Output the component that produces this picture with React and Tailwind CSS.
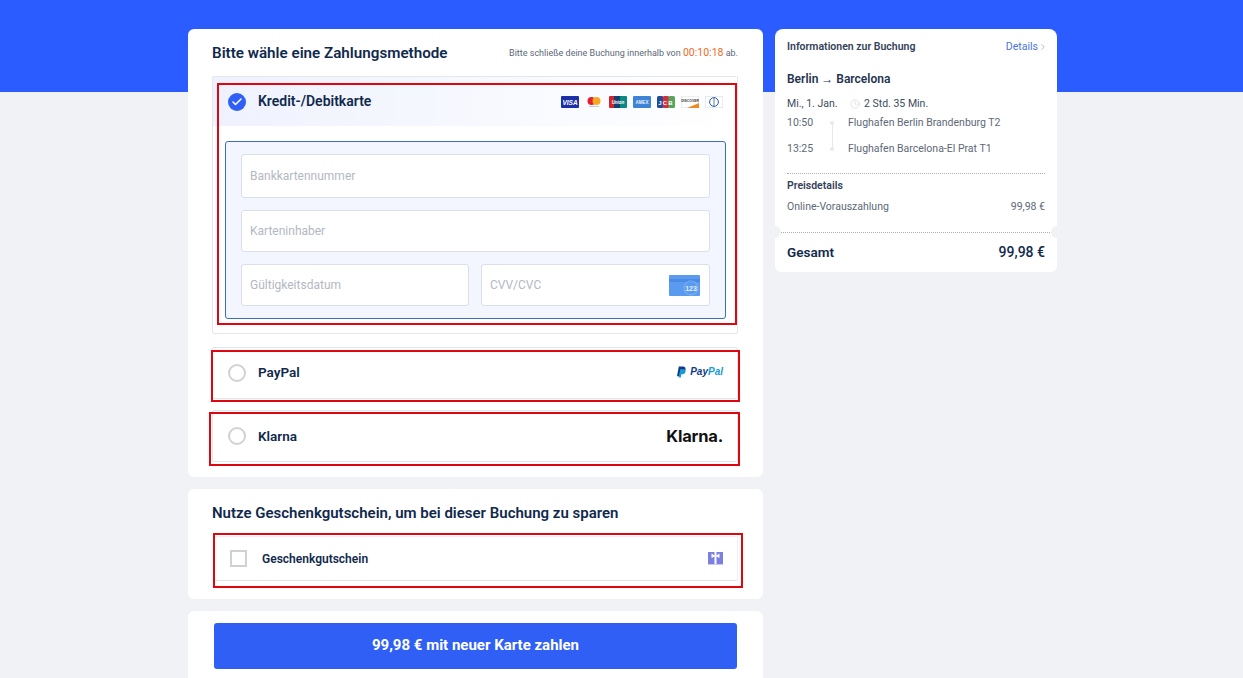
import { Check, ChevronRight, Clock } from "lucide-react";

const navy = "text-[#0f294d]";

function RedFrame({ className }) {
  return <div className={`pointer-events-none absolute border-2 border-[#e0060f] ${className}`} />;
}

function CardLogos() {
  return (
    <div className="flex items-center gap-[6px]">
      <svg width="18" height="12" viewBox="0 0 18 12">
        <rect width="18" height="12" rx="1" fill="#1c2fa8" />
        <text x="9" y="8.5" textAnchor="middle" fontSize="6.5" fontWeight="700" fontStyle="italic" fill="#fff" fontFamily="Liberation Sans, sans-serif">VISA</text>
      </svg>
      <svg width="18" height="12" viewBox="0 0 18 12">
        <circle cx="6.5" cy="5" r="4" fill="#e5202e" />
        <circle cx="11.5" cy="5" r="4" fill="#f7a823" />
        <rect x="4" y="10" width="10" height="1" fill="#c9c9d2" />
      </svg>
      <svg width="18" height="12" viewBox="0 0 18 12">
        <rect width="7" height="12" rx="1" fill="#d2232f" />
        <rect x="5" width="7" height="12" fill="#12406f" />
        <rect x="11" width="7" height="12" rx="1" fill="#0a8a83" />
        <text x="9" y="8" textAnchor="middle" fontSize="4.5" fontWeight="700" fontStyle="italic" fill="#fff" fontFamily="Liberation Sans, sans-serif">Union</text>
      </svg>
      <svg width="18" height="12" viewBox="0 0 18 12">
        <rect width="18" height="12" rx="1" fill="#3d84d6" />
        <text x="9" y="8" textAnchor="middle" fontSize="4.5" fontWeight="700" fill="#e6f0fb" fontFamily="Liberation Sans, sans-serif">AMEX</text>
      </svg>
      <svg width="18" height="12" viewBox="0 0 18 12">
        <rect width="6.5" height="12" rx="1.5" fill="#1f4c9c" />
        <rect x="5.75" width="6.5" height="12" rx="1.5" fill="#d3303f" />
        <rect x="11.5" width="6.5" height="12" rx="1.5" fill="#55a65a" />
        <text x="9" y="8.5" textAnchor="middle" fontSize="6" fontWeight="700" fill="#fff" letterSpacing="1.2" fontFamily="Liberation Sans, sans-serif">JCB</text>
      </svg>
      <svg width="18" height="12" viewBox="0 0 18 12">
        <rect x="0.25" y="0.25" width="17.5" height="11.5" fill="#fff" stroke="#dcdfe6" strokeWidth="0.5" />
        <path d="M6 12 L18 7 V12 Z" fill="#ee8a22" />
        <text x="9" y="6" textAnchor="middle" fontSize="3.4" fontWeight="700" fill="#333" fontFamily="Liberation Sans, sans-serif">DISCOVER</text>
      </svg>
      <svg width="18" height="12" viewBox="0 0 18 12">
        <rect x="0.25" y="0.25" width="17.5" height="11.5" fill="#fff" stroke="#cfdcef" strokeWidth="0.5" />
        <circle cx="9" cy="6" r="4.4" fill="none" stroke="#2a5aa8" strokeWidth="1" />
        <rect x="8.6" y="2" width="0.8" height="8" fill="#2a5aa8" />
      </svg>
    </div>
  );
}

function PayPalLogo() {
  return (
    <div className="-mt-[3px] flex items-center gap-[4px]">
      <svg width="9" height="12" viewBox="0 0 10 12">
        <path d="M2 0 H6.5 C9 0 10 1.6 9.4 3.6 C8.9 5.6 7.2 6.8 5 6.8 H3.6 L3 10.6 H0 Z" fill="#123a86" />
        <path d="M3.6 3 H8 C9.6 3.4 9.9 4.8 9.4 6 C8.9 7.8 7.4 8.6 5.6 8.6 H4.8 L4.3 12 H1.8 Z" fill="#179bd7" />
      </svg>
      <span className="font-['Liberation_Sans',sans-serif] text-[10px] leading-none font-bold italic">
        <span className="text-[#123a86]">Pay</span>
        <span className="text-[#179bd7]">Pal</span>
      </span>
    </div>
  );
}

function Field({ label, className, children }) {
  return (
    <div className={`flex items-center justify-between rounded-[3px] border border-[#d9e0ec] bg-white pr-[9px] pl-[8px] text-[12px] text-[#b3b8c2] ${className}`}>
      <span>{label}</span>
      {children}
    </div>
  );
}

function Radio() {
  return <span className="h-[18px] w-[18px] shrink-0 rounded-full border-2 border-[#ced1d6] bg-white" />;
}

export default function App() {
  return (
    <div className={`relative h-[678px] overflow-hidden bg-[#f0f2f6] font-['Roboto',sans-serif] ${navy}`}>
      <div className="h-[92px] bg-[#2b5cff]" />
      <div className="-mt-[63px] flex items-start gap-[12px] pl-[188px]">
        <div className="flex w-[575px] flex-col gap-[12px]">
          <section className="h-[448px] rounded-[6px] bg-white pt-[13px] pr-[25px] pl-[24px]">
            <div className="flex h-[22px] items-center justify-between">
              <h1 className="text-[15.2px] font-semibold">Bitte wähle eine Zahlungsmethode</h1>
              <p className="text-[9px] text-[#5a6779]">
                Bitte schließe deine Buchung innerhalb von{" "}
                <span className="text-[10.5px] text-[#ee6a1f]">00:10:18</span> ab.
              </p>
            </div>
            <div className="relative mt-[12px] h-[258px] rounded-[2px] border border-[#e3e6eb]">
              <div className="flex h-[49px] items-center bg-[linear-gradient(90deg,#eff2fe,#ffffff)] pr-[14px] pl-[15px]">
                <span className="flex h-[18px] w-[18px] items-center justify-center rounded-full bg-[#2f5ff5]">
                  <Check size={12} strokeWidth={3} color="#fff" />
                </span>
                <span className="ml-[12px] flex-1 text-[14px] font-semibold">Kredit-/Debitkarte</span>
                <CardLogos />
              </div>
              <div className="mt-[15px] mr-[11px] ml-[12px] flex h-[178px] flex-col rounded-[3px] border border-[#3a6fc0] bg-[#f3f6fe] px-[15px] pt-[12px]">
                <Field label="Bankkartennummer" className="h-[44px]" />
                <Field label="Karteninhaber" className="mt-[12px] h-[42px]" />
                <div className="mt-[12px] flex gap-[12px]">
                  <Field label="Gültigkeitsdatum" className="h-[42px] w-[228px]" />
                  <Field label="CVV/CVC" className="h-[42px] flex-1">
                    <svg width="31" height="21" viewBox="0 0 31 21">
                      <rect width="31" height="21" rx="1" fill="#5b9bef" />
                      <rect y="4" width="31" height="3" fill="#4a8be6" />
                      <circle cx="22" cy="13" r="7" fill="none" stroke="#9cc4f7" strokeWidth="0.6" />
                      <text x="22" y="15.5" textAnchor="middle" fontSize="7" fontWeight="700" fill="#e4effd" fontFamily="Liberation Sans, sans-serif">123</text>
                    </svg>
                  </Field>
                </div>
              </div>
              <RedFrame className="top-[6px] left-[4px] h-[242px] w-[520px]" />
            </div>
            <div className="relative mt-[13px] flex h-[52px] items-center justify-between rounded-[2px] border border-[#e3e6eb] pr-[14px] pl-[15px]">
              <div className="flex items-center">
                <Radio />
                <span className="-mt-[2px] ml-[12px] text-[13.5px] font-semibold">PayPal</span>
              </div>
              <PayPalLogo />
              <RedFrame className="top-[2px] -right-[3px] -left-[2px] h-[52px]" />
            </div>
            <div className="relative mt-[11px] flex h-[52px] items-center justify-between rounded-[2px] border border-[#e3e6eb] pr-[14px] pl-[15px]">
              <div className="flex items-center">
                <Radio />
                <span className="ml-[12px] text-[13.5px] font-semibold">Klarna</span>
              </div>
              <span className="font-['Inter',sans-serif] text-[16.5px] leading-none font-bold tracking-[-0.2px] text-[#111]">Klarna.</span>
              <RedFrame className="top-[1px] -right-[3px] -left-[4px] h-[54px]" />
            </div>
          </section>

          <section className="h-[110px] rounded-[6px] bg-white pt-[13px] pr-[25px] pl-[24px]">
            <h2 className="flex h-[22px] items-center text-[15px] font-semibold">Nutze Geschenkgutschein, um bei dieser Buchung zu sparen</h2>
            <div className="relative mt-[12px] ml-[2px] flex h-[45px] items-center justify-between rounded-[2px] border border-[#eceef2] border-b-[#e0e3e8] pr-[14px] pl-[15px]">
              <div className="flex items-center">
                <span className="h-[17px] w-[17px] border-2 border-[#ced1d6] bg-white" />
                <span className="ml-[15px] text-[12px] font-semibold">Geschenkgutschein</span>
              </div>
              <svg width="15" height="13" viewBox="0 0 15 13">
                <rect width="15" height="12" fill="#7a7fe0" />
                <rect y="12" width="15" height="1" fill="#c9cbf3" />
                <rect x="6.5" width="2" height="12" fill="#fff" />
                <path d="M7.5 4 L3.5 1.5 V6 Z M7.5 4 L11.5 1.5 V6 Z" fill="#fff" />
              </svg>
              <RedFrame className="top-[-4px] -right-[6px] left-[-2px] h-[55px]" />
            </div>
          </section>

          <section className="h-[90px] rounded-[6px] bg-white px-[26px] pt-[12px]">
            <button className="h-[46px] w-full rounded-[3px] bg-[#2f5ff5] pb-[2px] text-[15px] font-bold text-white">
              99,98 € mit neuer Karte zahlen
            </button>
          </section>
        </div>

        <aside className="w-[282px]">
          <div className="relative h-[203px] rounded-t-[8px] rounded-b-[2px] bg-white px-[12px] pt-[12px]">
            <div className="flex h-[12px] items-center justify-between text-[10.5px]">
              <span className="font-semibold text-[#33415a]">Informationen zur Buchung</span>
              <span className="-mr-[3px] flex items-center text-[#4b74e0]">
                Details
                <ChevronRight size={10} strokeWidth={1.5} color="#8a94a6" />
              </span>
            </div>
            <div className="mt-[18px] h-[16px] text-[12px] leading-[16px] font-semibold text-[#243450]">Berlin → Barcelona</div>
            <div className="mt-[10px] flex h-[14px] items-center text-[10.5px] text-[#3c4a60]">
              <span className="w-[63px]">Mi., 1. Jan.</span>
              <Clock size={10} strokeWidth={1.25} color="#c3c8d0" />
              <span className="ml-[4px]">2 Std. 35 Min.</span>
            </div>
            <div className="relative mt-[5px] flex flex-col gap-[12px] text-[10.5px] leading-[14px] text-[#5d6878]">
              <div className="flex">
                <span className="w-[61px]">10:50</span>
                <span>Flughafen Berlin Brandenburg T2</span>
              </div>
              <div className="flex">
                <span className="w-[61px]">13:25</span>
                <span>Flughafen Barcelona-El Prat T1</span>
              </div>
              <span className="absolute top-[7px] left-[45px] h-[26px] w-[1px] bg-[#e6e9ee]" />
              <span className="absolute top-[5px] left-[43px] h-[4px] w-[4px] rounded-full bg-[#e6e9ee]" />
              <span className="absolute top-[31px] left-[43px] h-[4px] w-[4px] rounded-full bg-[#e6e9ee]" />
            </div>
            <div className="mt-[17px] border-t border-dotted border-[#aab0ba]" />
            <div className="mt-[6px] h-[12px] text-[10.5px] leading-[12px] font-semibold text-[#33415a]">Preisdetails</div>
            <div className="mt-[8px] flex justify-between text-[10.5px] leading-[14px] text-[#5d6878]">
              <span>Online-Vorauszahlung</span>
              <span>99,98 €</span>
            </div>
          </div>
          <div className="relative flex h-[40px] items-center justify-between rounded-t-[2px] rounded-b-[6px] border-t border-dotted border-[#aab0ba] bg-white px-[12px] text-[13.5px] font-semibold">
            <span>Gesamt</span>
            <span className="text-[14px] font-medium">99,98 €</span>
            <span className="absolute -top-[7px] -left-[6px] h-[12px] w-[12px] rounded-full bg-[#f0f2f6]" />
            <span className="absolute -top-[7px] -right-[6px] h-[12px] w-[12px] rounded-full bg-[#f0f2f6]" />
          </div>
        </aside>
      </div>
    </div>
  );
}
